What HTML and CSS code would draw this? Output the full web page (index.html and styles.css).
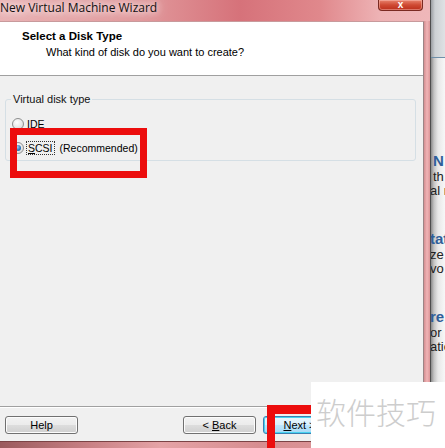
FILE: index.html
```html
<!DOCTYPE html>
<html lang="en">
<head>
  <meta charset="UTF-8" />
  <title>New Virtual Machine Wizard</title>
  <link rel="stylesheet" href="styles.css">
</head>
<body>

  <div class="desktop">
    <div class="window">
      <div class="titlebar">
        <span class="title">New Virtual Machine Wizard</span>
        <span class="close-btn">x</span>
      </div>

      <div class="frame-row">
        <div class="client">
          <div class="header">
            <h1>Select a Disk Type</h1>
            <p>What kind of disk do you want to create?</p>
          </div>

          <div class="content">
            <fieldset class="group">
              <legend>Virtual disk type</legend>
              <label class="radio">
                <span class="dot"></span>
                <span><u>I</u>DE</span>
              </label>
              <label class="radio checked">
                <span class="dot"></span>
                <span class="focus"><u>S</u>CSI</span>
                <span>(Recommended)</span>
              </label>
            </fieldset>
          </div>

          <div class="footer">
            <button class="btn">Help</button>
            <span class="spacer"></span>
            <button class="btn">&lt; <u>B</u>ack</button>
            <button class="btn default"><u>N</u>ext &gt;</button>
          </div>
        </div>
        <div class="side-frame"></div>
      </div>

      <div class="bottom-frame"></div>
    </div>

    <div class="behind">
      <div class="behind-top"></div>
      <div class="behind-text">
        <p class="head first">N</p>
        <p>th</p>
        <p class="cut">al r</p>
        <p class="head cut gap">tat</p>
        <p class="cut">ze</p>
        <p class="cut">vo</p>
        <p class="head cut gap">re</p>
        <p class="cut">or</p>
        <p class="cut">atio</p>
      </div>
    </div>

    <!-- annotations laid over the screenshot -->
    <div class="mark mark-radio"></div>
    <div class="mark mark-next"></div>
    <div class="watermark">软件技巧</div>
  </div>

</body>
</html>
```

FILE: styles.css
```css
* {
  box-sizing: border-box;
}

body {
  margin: 0;
  padding: 0;
  width: 445px;
  height: 448px;
  overflow: hidden;
  font-family: 'Liberation Sans', Arial, sans-serif;
  font-size: 11px;
  color: #000;
}

.desktop {
  position: relative;
  display: flex;
  width: 445px;
  height: 448px;
  overflow: hidden;
}

/* ---- window ---- */

.window {
  width: 430px;
  display: flex;
  flex-direction: column;
  background: linear-gradient(90deg, #e9b2b4 0, #e1999c 140px, #d6727a 240px, #e0888c 320px, #eeb3b5 380px, #efb7b9 430px);
}

.titlebar {
  height: 21px;
  display: flex;
  justify-content: space-between;
  align-items: flex-start;
  padding-right: 7px;
}

.title {
  font-family: 'Open Sans', 'Liberation Sans', sans-serif;
  font-size: 12px;
  line-height: 15px;
  color: #111;
  text-shadow: 0 0 6px #fbe9e9, 0 0 10px #fbe9e9, 0 0 14px #f7dada;
}

.close-btn {
  width: 45px;
  height: 11px;
  border: 1px solid #7a2a22;
  border-top: none;
  border-radius: 0 0 4px 4px;
  background: linear-gradient(#e8836e, #cf4a33 50%, #bb2f1c);
  color: #fff;
  font-weight: bold;
  font-size: 10px;
  line-height: 10px;
  text-align: center;
  box-shadow: inset 0 0 0 1px rgba(255, 200, 190, 0.45);
}

.frame-row {
  flex: 1;
  display: flex;
}

.client {
  width: 424px;
  display: flex;
  flex-direction: column;
  background: #f0f0f0;
  border-top: 1px solid #c89a9c;
  border-right: 1px solid #9c8586;
}

.side-frame {
  flex: 1;
  background: linear-gradient(90deg, #d48f92, #f0b4b6 50%, #dc9598);
}

.bottom-frame {
  height: 7px;
  border-top: 1px solid #7b4446;
  background: linear-gradient(90deg, #9a5a5d 0, #c98185 90px, #e5a3a6 160px, #d78d90 260px, #e4a0a3 430px);
}

/* ---- header ---- */

.header {
  height: 54px;
  background: #fff;
  border-bottom: 1px solid #a0a0a0;
  padding: 7px 0 0 22px;
}

.header h1 {
  margin: 0;
  font-size: 11.5px;
  line-height: 14px;
  font-weight: bold;
}

.header p {
  margin: 2px 0 0 24px;
  line-height: 14px;
}

/* ---- body ---- */

.content {
  flex: 1;
  border-bottom: 1px solid #a0a0a0;
}

.group {
  margin: 17px 7px 0 5px;
  padding: 0 5px 6px;
  border: 1px solid #d5dfe5;
  border-radius: 3px;
  display: flex;
  flex-direction: column;
  gap: 11px;
}

.group legend {
  padding: 0 2px;
  line-height: 13px;
  color: #111;
}

.radio {
  display: flex;
  align-items: center;
  gap: 3px;
  height: 13px;
  margin-left: 1px;
  font-size: 10.5px;
}

.radio:first-of-type {
  margin-top: 11px;
}

.dot {
  width: 12px;
  height: 12px;
  border-radius: 50%;
  border: 1px solid #8e8f8f;
  background: radial-gradient(circle at 40% 35%, #fff 0, #e9e9e9 50%, #cfcfcf 100%);
  display: flex;
  align-items: center;
  justify-content: center;
}

.radio.checked .dot::after {
  content: '';
  width: 6px;
  height: 6px;
  border-radius: 50%;
  background: radial-gradient(circle at 40% 35%, #9fd0f2, #2c73b7 60%, #174f8f);
}

.focus {
  outline: 1px dotted #333;
  outline-offset: 0;
  padding: 0 1px;
  margin-right: 3px;
}

/* ---- footer ---- */

.footer {
  height: 34px;
  border-top: 1px solid #fff;
  display: flex;
  align-items: flex-start;
  gap: 7px;
  padding: 8px 87px 0 5px;
}

.spacer {
  flex: 1;
}

.btn {
  width: 73px;
  height: 18px;
  padding: 0;
  font-family: inherit;
  font-size: 11px;
  line-height: 16px;
  color: #000;
  border: 1px solid #707070;
  border-radius: 3px;
  background: linear-gradient(#f2f2f2 0, #ebebeb 49%, #dddddd 50%, #cfcfcf 100%);
  box-shadow: inset 0 0 0 1px #fcfcfc;
}

.btn.default {
  border-color: #3c7fb1;
  background: linear-gradient(#eaf6fd 0, #d9f0fc 49%, #bee6fd 50%, #a7d9f5 100%);
  box-shadow: inset 0 0 0 1px #48d2f0;
}

/* ---- window behind ---- */

.behind {
  flex: 1;
  display: flex;
  flex-direction: column;
  border-left: 1px solid #4e4e4e;
  background: linear-gradient(90deg, #8a8a8a 0, #c4c4c4 3px, #e8e8e8 7px, #f7f7f7 14px);
  overflow: hidden;
}

.behind-top {
  height: 58px;
  background: linear-gradient(90deg, #9a9ea2 0, #cdd1d4 4px, #dfe2e4 14px);
  border-bottom: 1px solid #6f8fa8;
}

.behind-text {
  padding: 94px 0 0 2px;
  font-size: 13px;
  line-height: 14px;
  color: #222;
  white-space: nowrap;
}

.behind-text p {
  margin: 0;
}

.behind-text .head {
  color: #2f5f99;
  font-weight: bold;
  font-size: 15px;
  line-height: 18px;
}

.behind-text .gap {
  margin-top: 32px;
}

.behind-text .cut {
  margin-left: -3px;
}

/* ---- annotations ---- */

.mark {
  position: absolute;
  border: 7px solid #ec0d0d;
}

.mark-radio {
  left: 10px;
  top: 128px;
  width: 137px;
  height: 50px;
}

.mark-next {
  left: 267px;
  top: 405px;
  width: 60px;
  height: 60px;
  border-width: 9px 8px;
}

.watermark {
  position: absolute;
  left: 311px;
  top: 382px;
  width: 134px;
  height: 66px;
  background: #fff;
  color: #cdcdcd;
  font-family: 'Noto Sans CJK SC', sans-serif;
  font-weight: 300;
  font-size: 30px;
  line-height: 30px;
  padding: 14px 0 0 5px;
}
```
